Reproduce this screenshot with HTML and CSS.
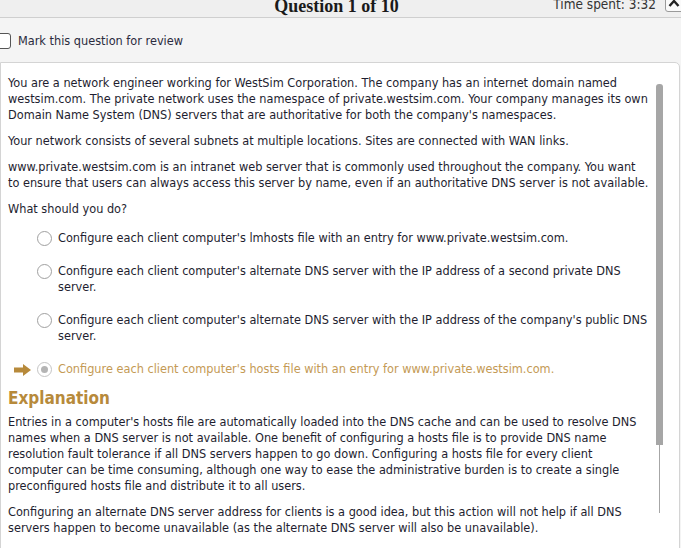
FILE: index.html
```html
<!DOCTYPE html>
<html>
<head>
<meta charset="utf-8">
<link rel="stylesheet" href="styles.css">
</head>
<body>
<header class="topbar">
  <div class="title">Question 1 of 10</div>
  <div class="timer">Time spent: 3:32</div>
  <button class="collapse"><svg width="12" height="10" viewBox="0 0 12 10"><path d="M1.5 8 L6 3 L10.5 8" fill="none" stroke="#222" stroke-width="2.4"/></svg></button>
</header>
<div class="review"><span class="check"></span><span>Mark this question for review</span></div>
<main class="panel">
  <div class="scroll"><div class="thumb"></div><div class="track"></div></div>
  <p>You are a network engineer working for WestSim Corporation. The company has an internet domain named<br>westsim.com. The private network uses the namespace of private.westsim.com. Your company manages its own<br>Domain Name System (DNS) servers that are authoritative for both the company's namespaces.</p>
  <p>Your network consists of several subnets at multiple locations. Sites are connected with WAN links.</p>
  <p>www.private.westsim.com is an intranet web server that is commonly used throughout the company. You want<br>to ensure that users can always access this server by name, even if an authoritative DNS server is not available.</p>
  <p>What should you do?</p>
  <ul class="options">
    <li class="option"><span class="radio"></span><span>Configure each client computer's lmhosts file with an entry for www.private.westsim.com.</span></li>
    <li class="option"><span class="radio"></span><span>Configure each client computer's alternate DNS server with the IP address of a second private DNS<br>server.</span></li>
    <li class="option"><span class="radio"></span><span>Configure each client computer's alternate DNS server with the IP address of the company's public DNS<br>server.</span></li>
    <li class="option correct"><svg class="arrow" width="17" height="12" viewBox="0 0 17 12"><path d="M0 3.5 H9 V0 L17 6 L9 12 V8.5 H0 Z" fill="#b78a3b"/></svg><span class="radio on"></span><span>Configure each client computer's hosts file with an entry for www.private.westsim.com.</span></li>
  </ul>
  <h2 class="expl">Explanation</h2>
  <p>Entries in a computer's hosts file are automatically loaded into the DNS cache and can be used to resolve DNS<br>names when a DNS server is not available. One benefit of configuring a hosts file is to provide DNS name<br>resolution fault tolerance if all DNS servers happen to go down. Configuring a hosts file for every client<br>computer can be time consuming, although one way to ease the administrative burden is to create a single<br>preconfigured hosts file and distribute it to all users.</p>
  <p>Configuring an alternate DNS server address for clients is a good idea, but this action will not help if all DNS<br>servers happen to become unavailable (as the alternate DNS server will also be unavailable).</p>
</main>
</body>
</html>
```
FILE: styles.css
```css
html, body {
  margin: 0;
  padding: 0;
  background: #f4f4f4;
  height: 548px;
  overflow: hidden;
}
body {
  font-family: "DejaVu Sans Condensed", "DejaVu Sans", sans-serif;
  font-size: 12.6px;
  color: #1e1e30;
}
.topbar {
  height: 17px;
  border-bottom: 1px solid #cfcfcf;
  background: #efefef;
  position: relative;
  overflow: hidden;
}
.title {
  text-align: center;
  font-family: "Liberation Serif", serif;
  font-weight: bold;
  font-size: 18px;
  line-height: 20px;
  margin-top: -4px;
  padding-right: 8px;
  color: #1a1a1a;
}
.timer {
  position: absolute;
  right: 25px;
  top: -5px;
  font-size: 13.5px;
  line-height: 18px;
  color: #333;
}
.collapse {
  position: absolute;
  left: 665px;
  top: -8px;
  width: 26px;
  height: 20px;
  border: 1px solid #9a9a9a;
  border-radius: 3px;
  background: #fafafa;
  padding: 0 0 0 2px;
  margin: 0;
  display: flex;
  align-items: flex-end;
}
.collapse svg {
  margin-bottom: 3px;
}
.review {
  display: flex;
  align-items: center;
  gap: 7px;
  height: 44px;
  padding-top: 1px;
  box-sizing: border-box;
  color: #2b2b3e;
}
.check {
  width: 12px;
  height: 14px;
  border: 1px solid #555;
  border-radius: 3px;
  margin-left: -3px;
  background: #fff;
}
.panel {
  position: relative;
  background: #fff;
  border: 1px solid #d4d4d4;
  border-radius: 0 5px 0 0;
  margin-right: 1px;
  padding: 12px 8px 0 7px;
  height: 560px;
  box-sizing: border-box;
  white-space: nowrap;
}
.panel p {
  margin: 0 0 10px;
  line-height: 16px;
}
.scroll {
  position: absolute;
  left: 655px;
  top: 21px;
  width: 7px;
}
.thumb {
  height: 361px;
  background: #a6a6a6;
  border-radius: 3px 3px 0 0;
}
.track {
  width: 1px;
  height: 68px;
  margin-left: 3px;
  background: #a6a6a6;
}
.options {
  list-style: none;
  margin: 13px 0 0;
  padding: 0;
}
.option {
  display: flex;
  align-items: flex-start;
  line-height: 16px;
  margin: 0 0 17px 29px;
  position: relative;
}
.radio {
  width: 13px;
  height: 13px;
  border: 1px solid #a0a0a0;
  border-radius: 50%;
  background: #fff;
  margin: 1px 6px 0 0;
  flex: none;
  box-sizing: content-box;
  position: relative;
}
.radio.on {
  border-color: #c4c4c4;
}
.radio.on::after {
  content: "";
  position: absolute;
  left: 3px;
  top: 3px;
  width: 7px;
  height: 7px;
  border-radius: 50%;
  background: #b4b4b4;
}
.correct {
  color: #c49a55;
  margin-bottom: 11px;
}
.arrow {
  position: absolute;
  left: -23px;
  top: 3px;
}
.expl {
  margin: 0 0 5px;
  font-family: "DejaVu Sans Condensed", "DejaVu Sans", sans-serif;
  font-weight: bold;
  font-size: 17px;
  line-height: 21px;
  color: #b78a3b;
}
```
